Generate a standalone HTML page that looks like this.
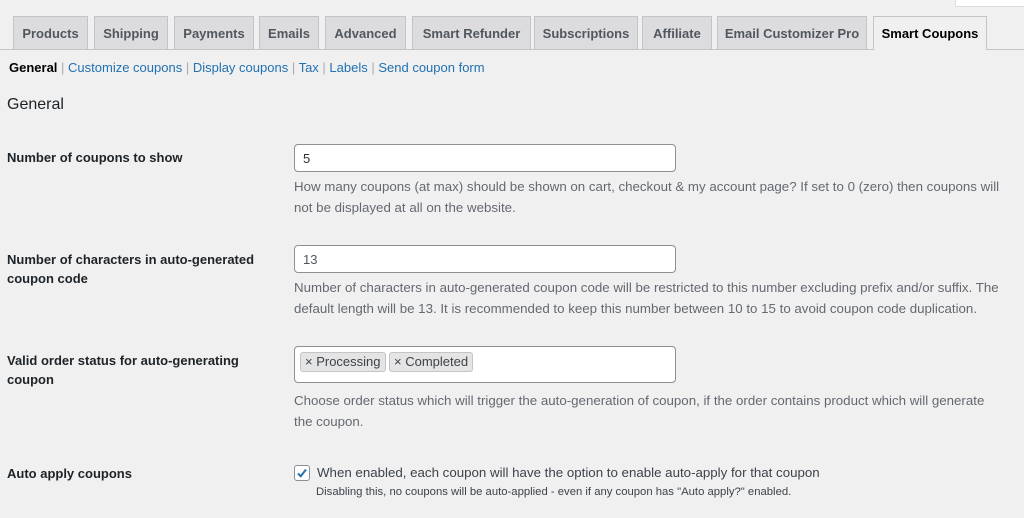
<!DOCTYPE html><html><head><style>
body{margin:0;width:1024px;height:518px;background:#f0f0f1;font-family:"Liberation Sans",sans-serif;color:#3c434a;position:relative;overflow:hidden;font-size:13px}
.a{position:absolute;white-space:nowrap}
.tab{position:absolute;top:16px;height:33px;background:#dcdcde;border:1px solid #c3c4c7;border-bottom:none;box-sizing:border-box;font-size:13px;font-weight:bold;color:#50575e;text-align:center;line-height:33px}
.tab.on{background:#f0f0f1;color:#000;height:34px}
.line{position:absolute;top:49px;left:0;width:1024px;height:1px;background:#c3c4c7}
.sub a{color:#2271b1;text-decoration:none}
.sub{font-size:13px;color:#a7aaad}
.lbl{font-weight:bold;font-size:13px;color:#1d2327;line-height:19px}
.inp{position:absolute;left:294px;width:382px;background:#fff;border:1px solid #8c8f94;border-radius:4px;box-sizing:border-box}
.desc{position:absolute;left:294px;font-size:13.3px;color:#646970;line-height:21px;width:730px}
.chip{position:absolute;top:5px;height:20px;background:#e4e4e4;border:1px solid #c3c4c7;border-radius:3px;box-sizing:border-box;font-size:13px;line-height:18px;color:#3c434a;padding:0 4px}
</style></head><body>
<div style="position:absolute;left:955px;top:0;width:69px;height:6px;background:#fff;border:1px solid #ddd;border-top:none"></div>
<div class="line"></div>
<div class="tab" style="left:13px;width:75px">Products</div>
<div class="tab" style="left:94px;width:74px">Shipping</div>
<div class="tab" style="left:174px;width:80px">Payments</div>
<div class="tab" style="left:259px;width:60px">Emails</div>
<div class="tab" style="left:325px;width:81px">Advanced</div>
<div class="tab" style="left:412px;width:119px">Smart Refunder</div>
<div class="tab" style="left:534px;width:104px">Subscriptions</div>
<div class="tab" style="left:642px;width:70px">Affiliate</div>
<div class="tab" style="left:717px;width:150px">Email Customizer Pro</div>
<div class="tab on" style="left:873px;width:114px">Smart Coupons</div>
<div class="a sub" style="left:9px;top:60px"><b style="color:#000">General</b> | <a>Customize coupons</a> | <a>Display coupons</a> | <a>Tax</a> | <a>Labels</a> | <a>Send coupon form</a></div>
<div class="a" style="left:7px;top:96px;font-size:16px;color:#1d2327">General</div>
<div class="a lbl" style="left:7px;top:148px">Number of coupons to show</div>
<div class="inp" style="top:144px;height:28px;padding:6px 8px;font-size:13px;color:#2c3338">5</div>
<div class="desc" style="top:176px">How many coupons (at max) should be shown on cart, checkout &amp; my account page? If set to 0 (zero) then coupons will<br>not be displayed at all on the website.</div>
<div class="a lbl" style="left:7px;top:250px">Number of characters in auto-generated<br>coupon code</div>
<div class="inp" style="top:245px;height:28px;padding:6px 8px;font-size:13px;color:#50575e">13</div>
<div class="desc" style="top:277px">Number of characters in auto-generated coupon code will be restricted to this number excluding prefix and/or suffix. The<br>default length will be 13. It is recommended to keep this number between 10 to 15 to avoid coupon code duplication.</div>
<div class="a lbl" style="left:7px;top:351px">Valid order status for auto-generating<br>coupon</div>
<div class="inp" style="top:346px;height:37px"><div class="chip" style="left:5px">× Processing</div><div class="chip" style="left:94px">× Completed</div></div>
<div class="desc" style="top:390px">Choose order status which will trigger the auto-generation of coupon, if the order contains product which will generate<br>the coupon.</div>
<div class="a lbl" style="left:7px;top:464px">Auto apply coupons</div>
<div class="a" style="left:294px;top:465px;width:14px;height:14px;background:#fff;border:1px solid #8c8f94;border-radius:3px"><svg width="14" height="14" viewBox="0 0 14 14"><path d="M3 7.5l2.7 2.7L11 3.5" stroke="#2271b1" stroke-width="2" fill="none"/></svg></div>
<div class="a" style="left:317px;top:465px;font-size:13.3px;color:#3c434a">When enabled, each coupon will have the option to enable auto-apply for that coupon</div>
<div class="a" style="left:316px;top:486px;font-size:11.3px;color:#3c434a">Disabling this, no coupons will be auto-applied - even if any coupon has "Auto apply?" enabled.</div>
</body></html>
